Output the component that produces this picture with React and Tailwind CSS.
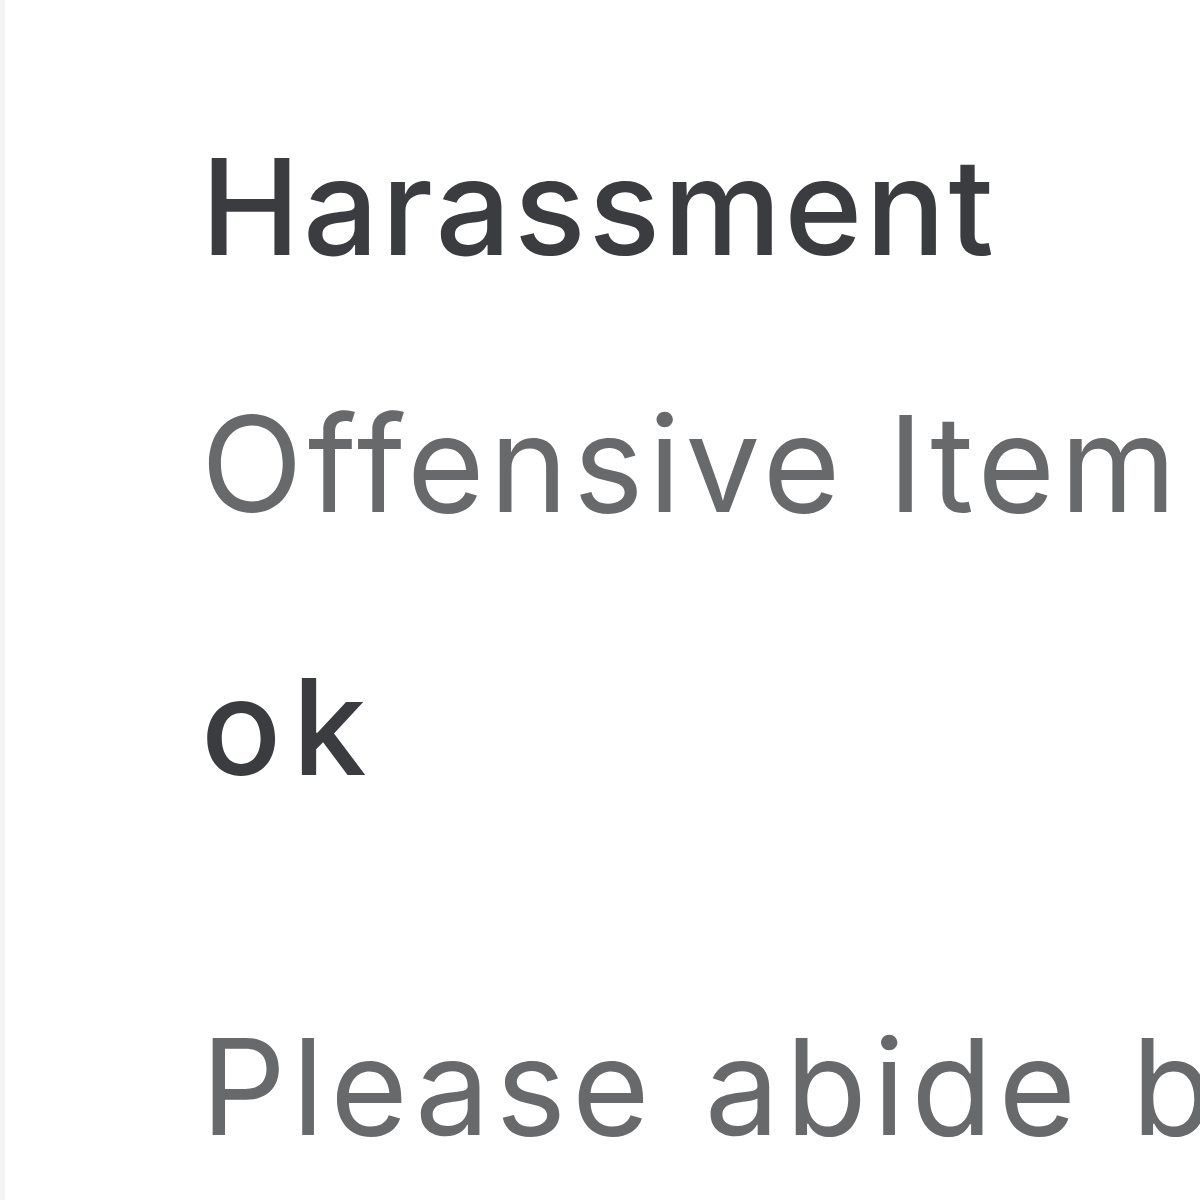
export default function App() {
  return (
    <div className="w-[1200px] h-[1200px] overflow-hidden bg-white border-l-[5px] border-[#f4f4f4]">
      <div
        className="pl-[196px] pt-[77px] whitespace-nowrap text-[133px] leading-[260px]"
        style={{ fontFamily: 'Inter, "Liberation Sans", sans-serif' }}
      >
        <div className="font-medium tracking-[3px] text-[#3b3c3f]">Harassment</div>
        <div className="tracking-[5px] text-[#68696b] -mt-[3px]">Offensive Item</div>
        <div className="font-medium tracking-[11px] text-[#3b3c3f] mt-[3px]">ok</div>
        <div className="tracking-[6px] [word-spacing:6px] text-[#68696b] mt-[100px]">
          Please abide by the rules
        </div>
      </div>
    </div>
  );
}
